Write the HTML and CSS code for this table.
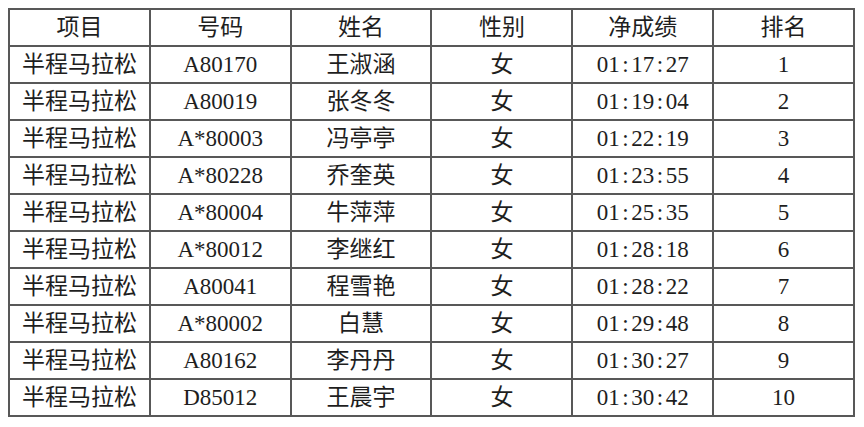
FILE: index.html
```html
<!DOCTYPE html>
<html lang="zh">
<head>
<meta charset="utf-8">
<title>半程马拉松成绩</title>
<link rel="stylesheet" href="styles.css">
</head>
<body>
<div class="results">
  <div class="cell">项目</div><div class="cell">号码</div><div class="cell">姓名</div><div class="cell">性别</div><div class="cell">净成绩</div><div class="cell">排名</div>
  <div class="cell">半程马拉松</div><div class="cell">A80170</div><div class="cell">王淑涵</div><div class="cell">女</div><div class="cell">01<span class="c">:</span>17<span class="c">:</span>27</div><div class="cell">1</div>
  <div class="cell">半程马拉松</div><div class="cell">A80019</div><div class="cell">张冬冬</div><div class="cell">女</div><div class="cell">01<span class="c">:</span>19<span class="c">:</span>04</div><div class="cell">2</div>
  <div class="cell">半程马拉松</div><div class="cell">A*80003</div><div class="cell">冯亭亭</div><div class="cell">女</div><div class="cell">01<span class="c">:</span>22<span class="c">:</span>19</div><div class="cell">3</div>
  <div class="cell">半程马拉松</div><div class="cell">A*80228</div><div class="cell">乔奎英</div><div class="cell">女</div><div class="cell">01<span class="c">:</span>23<span class="c">:</span>55</div><div class="cell">4</div>
  <div class="cell">半程马拉松</div><div class="cell">A*80004</div><div class="cell">牛萍萍</div><div class="cell">女</div><div class="cell">01<span class="c">:</span>25<span class="c">:</span>35</div><div class="cell">5</div>
  <div class="cell">半程马拉松</div><div class="cell">A*80012</div><div class="cell">李继红</div><div class="cell">女</div><div class="cell">01<span class="c">:</span>28<span class="c">:</span>18</div><div class="cell">6</div>
  <div class="cell">半程马拉松</div><div class="cell">A80041</div><div class="cell">程雪艳</div><div class="cell">女</div><div class="cell">01<span class="c">:</span>28<span class="c">:</span>22</div><div class="cell">7</div>
  <div class="cell">半程马拉松</div><div class="cell">A*80002</div><div class="cell">白慧</div><div class="cell">女</div><div class="cell">01<span class="c">:</span>29<span class="c">:</span>48</div><div class="cell">8</div>
  <div class="cell">半程马拉松</div><div class="cell">A80162</div><div class="cell">李丹丹</div><div class="cell">女</div><div class="cell">01<span class="c">:</span>30<span class="c">:</span>27</div><div class="cell">9</div>
  <div class="cell">半程马拉松</div><div class="cell">D85012</div><div class="cell">王晨宇</div><div class="cell">女</div><div class="cell">01<span class="c">:</span>30<span class="c">:</span>42</div><div class="cell">10</div>
</div>
</body>
</html>
```
FILE: styles.css
```css
html, body {
  margin: 0;
  padding: 0;
  background: #ffffff;
}
body {
  padding: 8px;
}
.results {
  width: 847px;
  height: 409px;
  box-sizing: border-box;
  display: grid;
  grid-template-columns: repeat(6, 1fr);
  grid-template-rows: repeat(11, 1fr);
  gap: 2px;
  padding: 2px;
  background: #585858;
  font-family: "Liberation Serif", "Noto Sans CJK SC", serif;
  font-size: 23px;
  color: #1e1e1e;
}
.cell {
  background: #ffffff;
  display: flex;
  align-items: center;
  justify-content: center;
  line-height: 1;
  white-space: nowrap;
}
.c {
  display: inline-block;
  width: 0.5em;
  text-align: center;
}
```
